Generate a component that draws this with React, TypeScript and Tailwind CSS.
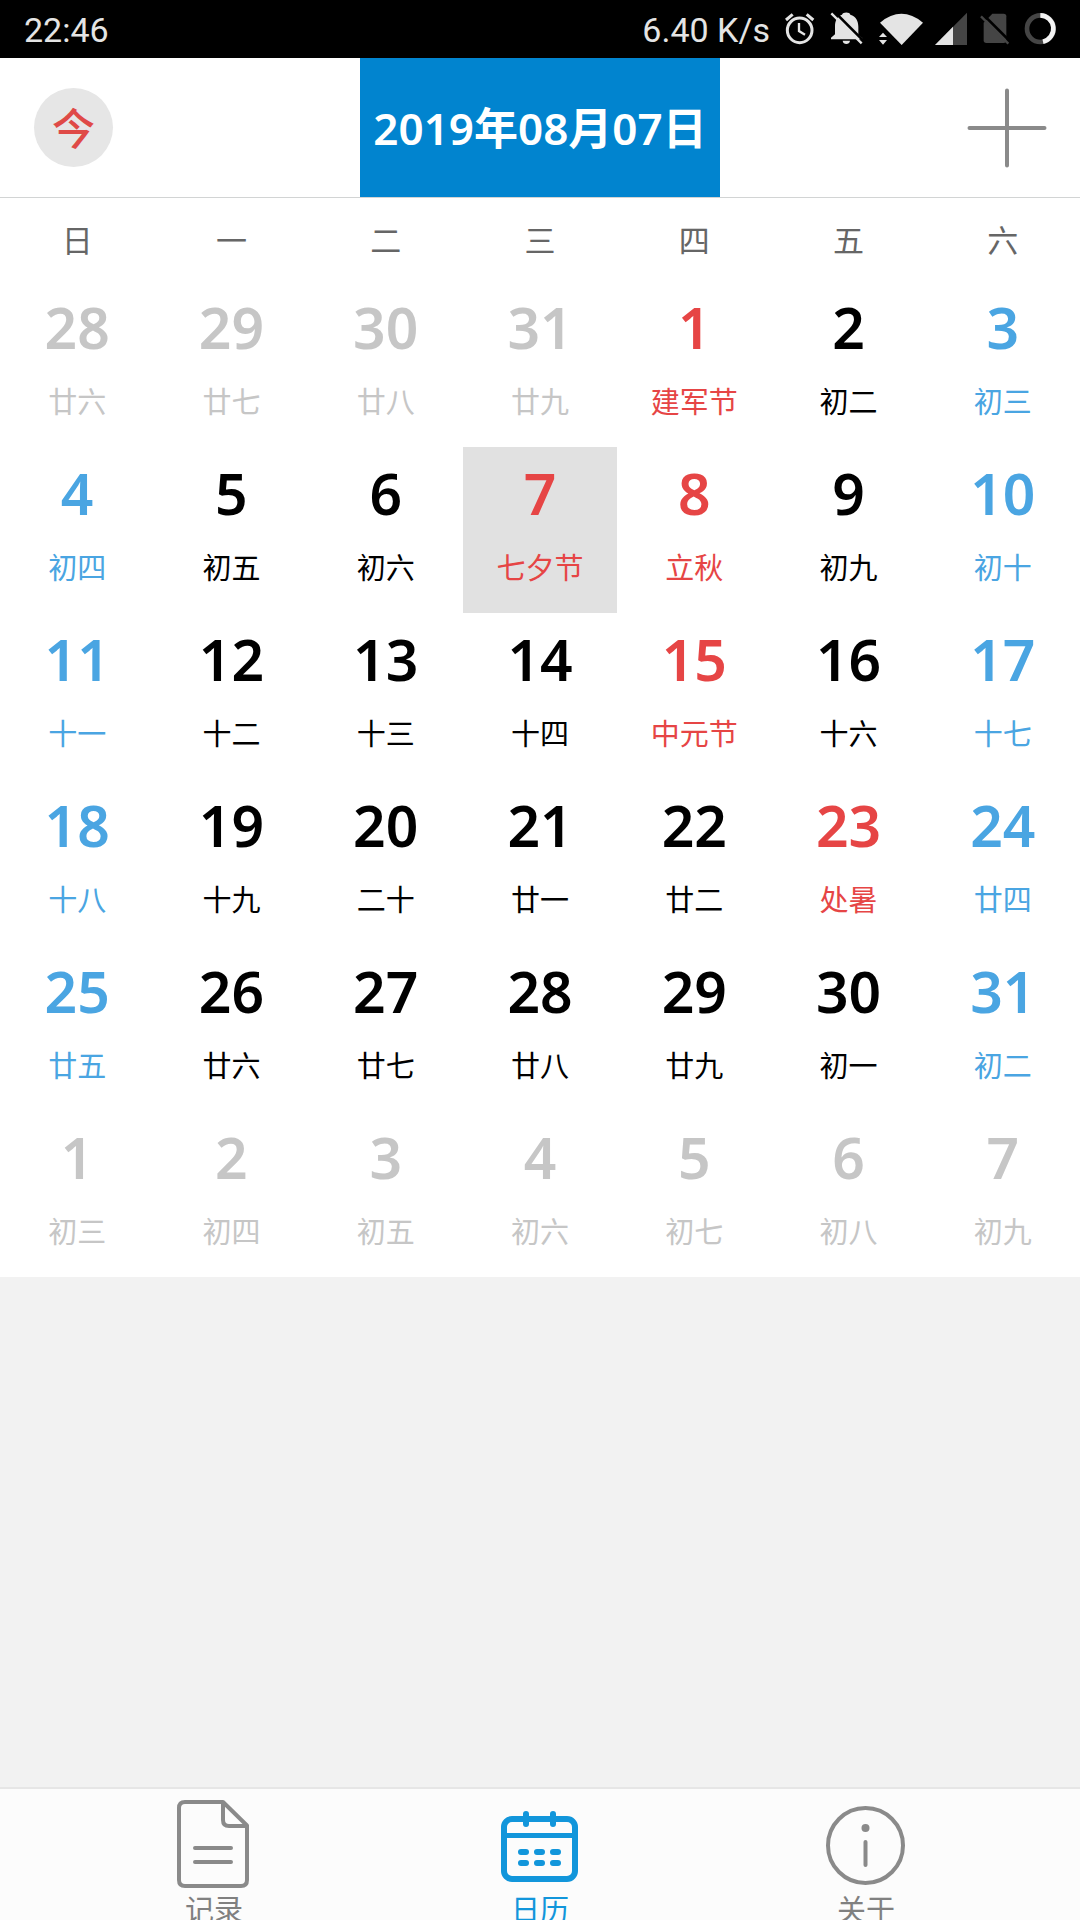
import React from "react";

type Tone = "muted" | "holiday" | "normal" | "weekend";

type Day = { day: number; lunar: string; tone: Tone; selected?: boolean };

const toneClass: Record<Tone, string> = {
  muted: "text-[#c6c6c6]",
  holiday: "text-[#e64545]",
  normal: "text-black",
  weekend: "text-[#4aa5e2]",
};

const weekdays = ["日", "一", "二", "三", "四", "五", "六"];

const lunar = [
  ["廿六", "廿七", "廿八", "廿九", "建军节", "初二", "初三"],
  ["初四", "初五", "初六", "七夕节", "立秋", "初九", "初十"],
  ["十一", "十二", "十三", "十四", "中元节", "十六", "十七"],
  ["十八", "十九", "二十", "廿一", "廿二", "处暑", "廿四"],
  ["廿五", "廿六", "廿七", "廿八", "廿九", "初一", "初二"],
  ["初三", "初四", "初五", "初六", "初七", "初八", "初九"],
];

const holidays = [1, 7, 8, 15, 23];
const leadingDays = 4;
const previousMonthLength = 31;
const monthLength = 31;

const weeks: Day[][] = lunar.map((row, week) =>
  row.map((text, column) => {
    const offset = week * 7 + column - leadingDays + 1;
    if (offset < 1) return { day: offset + previousMonthLength, lunar: text, tone: "muted" };
    if (offset > monthLength) return { day: offset - monthLength, lunar: text, tone: "muted" };
    const weekend = column === 0 || column === 6;
    const tone: Tone = holidays.includes(offset) ? "holiday" : weekend ? "weekend" : "normal";
    return { day: offset, lunar: text, tone, selected: offset === 7 };
  }),
);

function StatusBar() {
  return (
    <div className="flex h-[58px] shrink-0 items-center justify-between bg-black pr-[23px] pl-6 font-['Roboto',sans-serif] text-[34px] leading-none text-[#e4e4e4]">
      <span className="pt-0.5">22:46</span>
      <div className="flex items-center gap-3">
        <span className="pt-0.5">6.40 K/s</span>
        <svg viewBox="486 30 102 114" className="h-[38px] w-[34px]" fill="none" stroke="#e4e4e4" aria-hidden="true">
          <circle cx="539" cy="91" r="37" strokeWidth="9" />
          <path d="M537 69v24l18 11" strokeWidth="7" />
          <path d="M498 60l20-17M580 60l-20-17" strokeWidth="9" />
        </svg>
        <svg viewBox="624 30 108 114" className="h-[38px] w-[36px]" aria-hidden="true">
          <path
            fill="#e4e4e4"
            d="M666 44c2-9 24-9 25 0c17 5 24 19 24 36v24l12 10v4h-94v-5l12-10V79c0-17 6-30 21-35zM668 122h22c-1 13-21 13-22 0z"
          />
          <path d="M640 32l92 92" stroke="#000" strokeWidth="8" />
          <path d="M634 40l91 90" stroke="#e4e4e4" strokeWidth="7" />
        </svg>
        <svg viewBox="768 30 141 114" className="h-[38px] w-[47px]" fill="#e4e4e4" aria-hidden="true">
          <path d="M780 68q64-53 129 0l-64 67z" />
          <path d="M777 111l12-13 12 13zM777 120h24l-12 14z" />
        </svg>
        <svg viewBox="945 30 96 114" className="h-[38px] w-[32px]" aria-hidden="true">
          <path fill="#454545" d="M1041 38v97h-96z" />
          <path fill="#e4e4e4" d="M999 80v55h-54z" />
        </svg>
        <svg viewBox="1077 30 96 114" className="h-[38px] w-[32px]" aria-hidden="true">
          <path
            fill="#454545"
            d="M1117 41h34q8 0 8 8v72q0 8-8 8h-52q-8 0-8-8V68z"
          />
          <path d="M1089 43l80 80" stroke="#000" strokeWidth="8" />
          <path d="M1083 49l82 82" stroke="#454545" strokeWidth="7" />
        </svg>
        <svg viewBox="1209 30 102 114" className="h-[38px] w-[34px]" fill="none" strokeWidth="14" aria-hidden="true">
          <circle cx="1261" cy="86" r="40" stroke="#454545" />
          <path d="M1261 46a40 40 0 0 1 8 79" stroke="#f4f4f4" />
        </svg>
      </div>
    </div>
  );
}

function Header() {
  return (
    <header className="grid h-[140px] shrink-0 grid-cols-3 border-b border-[#d2d4d4] bg-white">
      <div className="flex items-center pl-[34px]">
        <button
          type="button"
          className="flex size-[79px] items-center justify-center rounded-full bg-[#e6e6e6] pt-0.5 text-[43px] leading-none font-medium text-[#df4a47]"
        >
          今
        </button>
      </div>
      <button
        type="button"
        className="bg-[#0184cf] text-[44px] leading-none font-semibold whitespace-nowrap text-white"
      >
        2019年08月07日
      </button>
      <div className="flex items-center justify-end pr-[33px]">
        <button type="button" aria-label="添加">
          <svg viewBox="0 0 80 80" className="size-20" stroke="#8a8a8a" strokeWidth="4" strokeLinecap="round" aria-hidden="true">
            <path d="M40 2.500v75M2.500 40h75" />
          </svg>
        </button>
      </div>
    </header>
  );
}

function Calendar() {
  return (
    <table className="w-full table-fixed border-collapse bg-white">
      <thead>
        <tr className="h-[83px]">
          {weekdays.map((name) => (
            <th key={name} scope="col" className="px-0 pt-0.5 pb-0 text-[31px] leading-none font-normal text-[#666]">
              {name}
            </th>
          ))}
        </tr>
      </thead>
      <tbody>
        {weeks.map((week, index) => (
          <tr key={index} className="h-[166px]">
            {week.map((cell) => (
              <td key={cell.day} className={cell.selected ? "bg-[#e1e1e1] p-0" : "p-0"}>
                <button
                  type="button"
                  aria-pressed={Boolean(cell.selected)}
                  className={`flex h-[166px] w-full flex-col items-center pt-2.5 ${toneClass[cell.tone]}`}
                >
                  <span className="text-[57px] leading-[72px] font-semibold">{cell.day}</span>
                  <span className="text-[29px] leading-[78px]">{cell.lunar}</span>
                </button>
              </td>
            ))}
          </tr>
        ))}
      </tbody>
    </table>
  );
}

function RecordIcon() {
  return (
    <svg viewBox="0 0 80 92" className="h-[92px] w-20" fill="none" stroke="#8a8a8a" strokeWidth="4" strokeLinecap="round" strokeLinejoin="round" aria-hidden="true">
      <path d="M49 4H11q-6 0-6 6v72q0 6 6 6h56q6 0 6-6V27.500L49 4v18q0 6 6 6h18" />
      <path d="M21 50h36M21 64h36" />
    </svg>
  );
}

function CalendarIcon() {
  return (
    <svg viewBox="0 0 80 92" className="h-[92px] w-20" fill="none" stroke="#1296db" strokeWidth="6" strokeLinecap="round" aria-hidden="true">
      <rect x="4" y="21" width="71" height="60" rx="8" />
      <path d="M4 37.500h71" strokeWidth="5" strokeLinecap="butt" />
      <path d="M26 16v10M53 16v10M21 54h5M37 54h5M53 54h5M21 65h5M37 65h5M53 65h5" />
    </svg>
  );
}

function InfoIcon() {
  return (
    <svg viewBox="0 0 80 92" className="h-[92px] w-20" fill="none" stroke="#8a8a8a" strokeWidth="4" strokeLinecap="round" aria-hidden="true">
      <circle cx="39.500" cy="47.500" r="37.500" />
      <circle cx="39.500" cy="30" r="4" fill="#8a8a8a" stroke="none" />
      <path d="M39.500 44v23" />
    </svg>
  );
}

const tabs = [
  { label: "记录", icon: <RecordIcon />, active: false },
  { label: "日历", icon: <CalendarIcon />, active: true },
  { label: "关于", icon: <InfoIcon />, active: false },
];

function TabBar() {
  return (
    <nav className="grid h-[133px] shrink-0 grid-cols-3 items-start overflow-hidden border-t-2 border-[#e6e6e6] bg-[#fcfcfc] px-[51px]">
      {tabs.map((tab) => (
        <a
          key={tab.label}
          href="#"
          aria-current={tab.active ? "page" : undefined}
          className={`flex flex-col items-center pt-[9px] text-[29px] leading-[40px] ${tab.active ? "text-[#1296db]" : "text-[#808080]"}`}
        >
          {tab.icon}
          <span>{tab.label}</span>
        </a>
      ))}
    </nav>
  );
}

export default function App() {
  return (
    <div lang="zh-CN" className="flex h-screen flex-col overflow-hidden bg-[#f2f2f2] font-['Noto_Sans','Noto_Sans_CJK_SC',sans-serif]">
      <StatusBar />
      <Header />
      <main className="min-h-0 flex-1">
        <Calendar />
      </main>
      <TabBar />
    </div>
  );
}
